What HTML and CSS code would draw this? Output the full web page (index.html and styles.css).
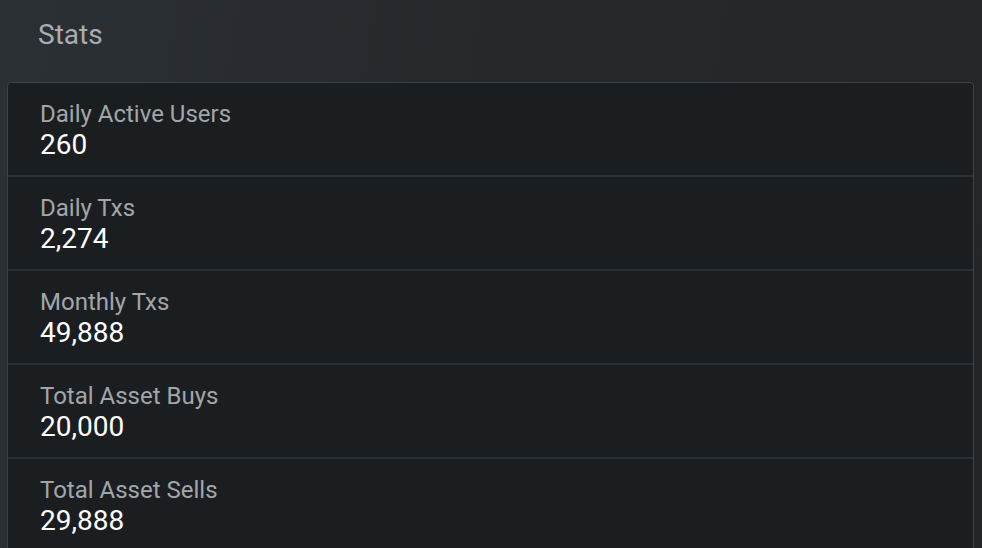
FILE: index.html
```html
<!DOCTYPE html>
<html>
<head>
<meta charset="utf-8">
<link rel="stylesheet" href="styles.css">
</head>
<body>
<div class="page">
  <h1 class="title">Stats</h1>
  <div class="card">
    <div class="row"><div class="label">Daily Active Users</div><div class="value">260</div></div>
    <div class="row"><div class="label">Daily Txs</div><div class="value">2,274</div></div>
    <div class="row"><div class="label">Monthly Txs</div><div class="value">49,888</div></div>
    <div class="row"><div class="label">Total Asset Buys</div><div class="value">20,000</div></div>
    <div class="row"><div class="label">Total Asset Sells</div><div class="value">29,888</div></div>
  </div>
</div>
</body>
</html>
```
FILE: styles.css
```css
html, body {
  margin: 0;
  padding: 0;
  height: 100%;
}
body {
  background: linear-gradient(100deg, #2b3034 0%, #26292c 45%, #242526 100%);
  font-family: Roboto, "Noto Sans", sans-serif;
  overflow: hidden;
}
.page {
  padding: 0 8px 0 7px;
}
.title {
  margin: 0;
  padding: 17px 0 0 31px;
  height: 64px;
  box-sizing: border-box;
  font-size: 28px;
  line-height: 36px;
  font-weight: 400;
  color: #a9adb1;
}
.card {
  margin-top: 18px;
  border: 1px solid #3b434a;
  border-radius: 4px;
  background: #1b1e21;
}
.row {
  padding: 17px 32px 13px;
  border-bottom: 2px solid #2b3237;
}
.row:last-child {
  border-bottom: none;
}
.label {
  font-size: 24px;
  line-height: 28px;
  color: #a2a6aa;
}
.value {
  font-size: 28px;
  line-height: 34px;
  color: #ffffff;
}
```
